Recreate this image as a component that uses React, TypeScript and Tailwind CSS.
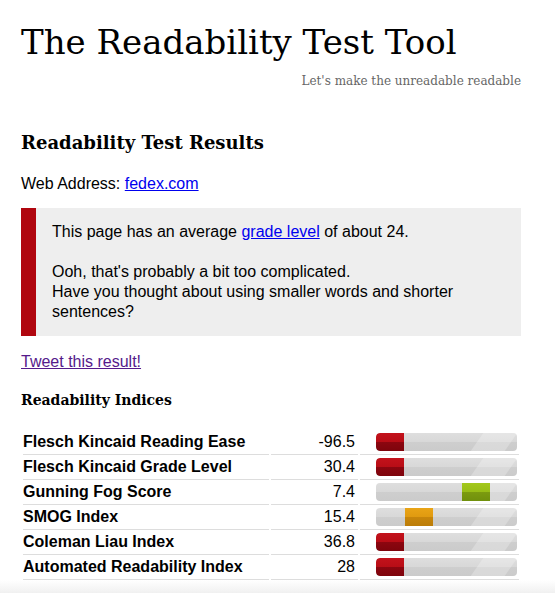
import React from 'react';

type Tone = 'red' | 'green' | 'orange';

interface Index {
  name: string;
  score: string;
  offset: number;
  tone: Tone;
}

const indices: Index[] = [
  { name: 'Flesch Kincaid Reading Ease', score: '-96.5', offset: 0, tone: 'red' },
  { name: 'Flesch Kincaid Grade Level', score: '30.4', offset: 0, tone: 'red' },
  { name: 'Gunning Fog Score', score: '7.4', offset: 86, tone: 'green' },
  { name: 'SMOG Index', score: '15.4', offset: 29, tone: 'orange' },
  { name: 'Coleman Liau Index', score: '36.8', offset: 0, tone: 'red' },
  { name: 'Automated Readability Index', score: '28', offset: 0, tone: 'red' },
];

const toneClass: Record<Tone, string> = {
  red: 'bg-[linear-gradient(to_bottom,#c3121b_0%,#b80d16_50%,#8c0610_50%,#7e040c_100%)]',
  green: 'bg-[linear-gradient(to_bottom,#a3c81c_0%,#98bd16_50%,#7c9b10_50%,#70900c_100%)]',
  orange: 'bg-[linear-gradient(to_bottom,#e9a416_0%,#e09a10_50%,#c8860b_50%,#bc7d09_100%)]',
};

function ScoreBar({ offset, tone }: { offset: number; tone: Tone }) {
  return (
    <div className="relative h-[18px] w-[141px] overflow-hidden rounded-[4px] bg-[linear-gradient(to_bottom,#dedede_0%,#d8d8d8_50%,#cecece_50%,#cbcbcb_100%)]">
      <div className="absolute right-[6px] top-0 h-full w-[34px] skew-x-[-35deg] bg-white/25" />
      <div
        className={`absolute top-0 h-full w-[28px] ${toneClass[tone]} ${offset === 0 ? 'rounded-l-[4px]' : ''}`}
        style={{ left: offset }}
      />
    </div>
  );
}

export default function App() {
  return (
    <div className="min-h-[593px] w-[555px] bg-white font-['Liberation_Sans',Arial,sans-serif] text-black">
      <div className="ml-[21px] w-[500px] pt-[20px]">
        <h1 className="font-['DejaVu_Serif',serif] text-[34px] leading-[44px]">
          The Readability Test Tool
        </h1>
        <p className="mt-[9px] text-right font-['DejaVu_Serif',serif] text-[12px] leading-[16px] text-[#666]">
          Let's make the unreadable readable
        </p>

        <h2 className="mt-[42px] font-['DejaVu_Serif',serif] text-[18px] font-bold leading-[24px]">
          Readability Test Results
        </h2>
        <p className="mt-[19px] text-[16px] leading-[20px]">
          Web Address:{' '}
          <a href="#" className="text-[#0000ee] underline">
            fedex.com
          </a>
        </p>

        <div className="mt-[14px] flex bg-[#eeeeee]">
          <div className="w-[15px] shrink-0 bg-[#b0060f]" />
          <div className="py-[14px] pl-[16px] pr-[16px] text-[16px] leading-[20px]">
            <p>
              This page has an average{' '}
              <a href="#" className="text-[#0000ee] underline">
                grade level
              </a>{' '}
              of about 24.
            </p>
            <p className="mt-[20px]">
              Ooh, that's probably a bit too complicated.
              <br />
              Have you thought about using smaller words and shorter sentences?
            </p>
          </div>
        </div>

        <p className="mt-[16px] text-[16px] leading-[20px]">
          <a href="#" className="text-[#551a8b] underline">
            Tweet this result!
          </a>
        </p>

        <h3 className="mt-[18px] font-['DejaVu_Serif',serif] text-[14px] font-bold leading-[20px]">
          Readability Indices
        </h3>

        <table className="mt-[20px] w-[500px] border-separate border-spacing-x-[2px] border-spacing-y-0 text-[16px]">
          <tbody>
            {indices.map((item) => (
              <tr key={item.name}>
                <td className="h-[25px] w-[246px] border-b border-[#dddddd] p-0 font-bold leading-[24px]">
                  {item.name}
                </td>
                <td className="w-[87px] border-b border-[#dddddd] p-0 pr-[3px] text-right leading-[24px]">
                  {item.score}
                </td>
                <td className="border-b border-[#dddddd] p-0 pl-[16px] align-middle">
                  <ScoreBar offset={item.offset} tone={item.tone} />
                </td>
              </tr>
            ))}
          </tbody>
        </table>
      </div>
      <div className="h-[16px] bg-[linear-gradient(to_bottom,#ffffff,#ededed)]" />
    </div>
  );
}
